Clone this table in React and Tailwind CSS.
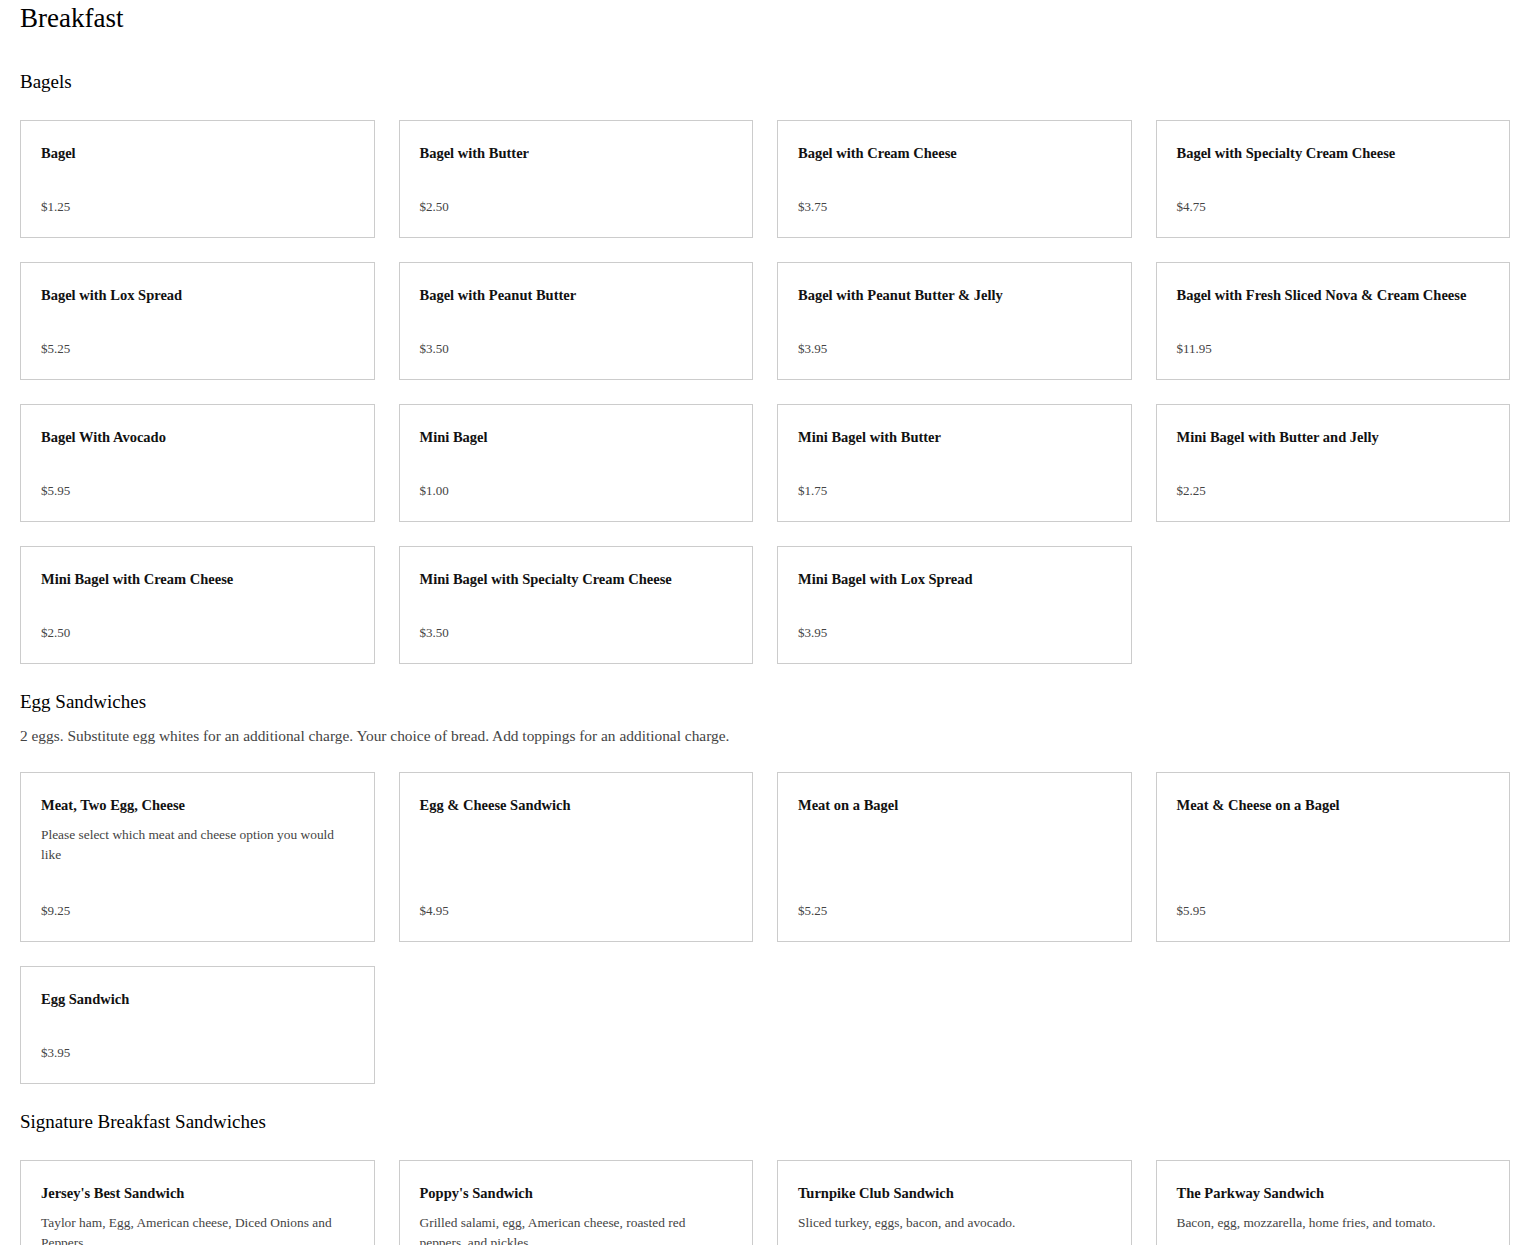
import React from "react";

const SECTIONS = [
  {
    name: "Bagels",
    items: [
      ["Bagel", "$1.25"],
      ["Bagel with Butter", "$2.50"],
      ["Bagel with Cream Cheese", "$3.75"],
      ["Bagel with Specialty Cream Cheese", "$4.75"],
      ["Bagel with Lox Spread", "$5.25"],
      ["Bagel with Peanut Butter", "$3.50"],
      ["Bagel with Peanut Butter & Jelly", "$3.95"],
      ["Bagel with Fresh Sliced Nova & Cream Cheese", "$11.95"],
      ["Bagel With Avocado", "$5.95"],
      ["Mini Bagel", "$1.00"],
      ["Mini Bagel with Butter", "$1.75"],
      ["Mini Bagel with Butter and Jelly", "$2.25"],
      ["Mini Bagel with Cream Cheese", "$2.50"],
      ["Mini Bagel with Specialty Cream Cheese", "$3.50"],
      ["Mini Bagel with Lox Spread", "$3.95"],
    ],
  },
  {
    name: "Egg Sandwiches",
    desc: "2 eggs. Substitute egg whites for an additional charge. Your choice of bread. Add toppings for an additional charge.",
    items: [
      ["Meat, Two Egg, Cheese", "$9.25", "Please select which meat and cheese option you would like"],
      ["Egg & Cheese Sandwich", "$4.95"],
      ["Meat on a Bagel", "$5.25"],
      ["Meat & Cheese on a Bagel", "$5.95"],
      ["Egg Sandwich", "$3.95"],
    ],
  },
  {
    name: "Signature Breakfast Sandwiches",
    items: [
      ["Jersey's Best Sandwich", "$9.95", "Taylor ham, Egg, American cheese, Diced Onions and Peppers"],
      ["Poppy's Sandwich", "$9.95", "Grilled salami, egg, American cheese, roasted red peppers, and pickles"],
      ["Turnpike Club Sandwich", "$10.95", "Sliced turkey, eggs, bacon, and avocado."],
      ["The Parkway Sandwich", "$9.95", "Bacon, egg, mozzarella, home fries, and tomato."],
    ],
  },
];

function ItemCard({ title, price, desc }) {
  return (
    <div className="flex flex-col border border-[#cccccc] bg-white px-5 pt-5 pb-5">
      <div className="text-[14.5px] leading-6 font-semibold text-[#111]">{title}</div>
      {desc && <div className="mt-2 mb-1 text-[13.4px] leading-5 text-[#444]">{desc}</div>}
      <div className="mt-auto pt-8 text-[13px] leading-5 text-[#444]">{price}</div>
    </div>
  );
}

export default function App() {
  return (
    <div className="min-h-screen bg-white px-5 text-black" style={{ fontFamily: '"Liberation Serif", "Times New Roman", serif' }}>
      <h1 className="text-[27px] leading-9">Breakfast</h1>
      {SECTIONS.map((s, i) => (
        <section key={s.name} className={i === 0 ? "mt-8" : "mt-6"}>
          <h2 className="text-[19px] leading-7">{s.name}</h2>
          {s.desc && <p className="mt-2.5 text-[15.4px] leading-5 text-[#444]">{s.desc}</p>}
          <div className={`grid grid-cols-4 gap-6 ${s.desc ? "mt-[26px]" : "mt-6"}`}>
            {s.items.map(([t, p, d]) => (
              <ItemCard key={t} title={t} price={p} desc={d} />
            ))}
          </div>
        </section>
      ))}
      <div className="h-6" />
    </div>
  );
}
